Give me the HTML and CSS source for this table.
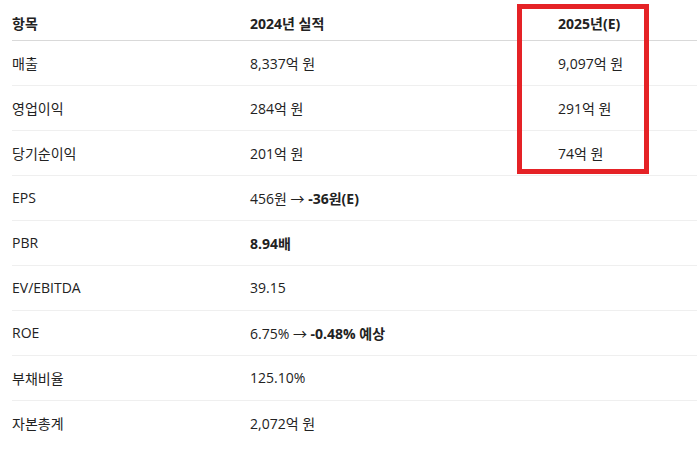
FILE: index.html
```html
<!DOCTYPE html>
<html lang="ko">
<head>
<meta charset="utf-8">
<link rel="stylesheet" href="styles.css">
</head>
<body>
<div class="wrap">
  <table class="fin">
    <thead>
      <tr><th class="c1">항목</th><th class="c2">2024년 실적</th><th class="c3">2025년(E)</th></tr>
    </thead>
    <tbody>
      <tr><td>매출</td><td>8,337억 원</td><td>9,097억 원</td></tr>
      <tr><td>영업이익</td><td>284억 원</td><td>291억 원</td></tr>
      <tr><td>당기순이익</td><td>201억 원</td><td>74억 원</td></tr>
      <tr><td>EPS</td><td>456원 → <b>-36원(E)</b></td><td></td></tr>
      <tr><td>PBR</td><td><b>8.94배</b></td><td></td></tr>
      <tr><td>EV/EBITDA</td><td>39.15</td><td></td></tr>
      <tr><td>ROE</td><td>6.75% → <b>-0.48% 예상</b></td><td></td></tr>
      <tr><td>부채비율</td><td>125.10%</td><td></td></tr>
      <tr><td>자본총계</td><td>2,072억 원</td><td></td></tr>
    </tbody>
  </table>
  <div class="highlight"></div>
</div>
</body>
</html>
```

FILE: styles.css
```css
html, body {
  margin: 0;
  padding: 0;
  background: #fff;
}
body {
  font-family: "Open Sans", "Noto Sans CJK KR", sans-serif;
  font-size: 14px;
  color: #222;
}
.wrap {
  position: relative;
  padding-left: 12px;
}
.fin {
  border-collapse: collapse;
  width: 685px;
  table-layout: fixed;
}
.fin th, .fin td {
  padding: 0;
  text-align: left;
  vertical-align: middle;
}
.fin th {
  height: 40px;
  font-weight: 700;
  border-bottom: 1px solid #d9d9d9;
  padding-top: 7px;
  box-sizing: border-box;
}
.fin td {
  height: 44px;
  border-bottom: 1px solid #efefef;
}
.fin tbody tr:last-child td {
  border-bottom: none;
}
.fin b {
  font-weight: 700;
}
.c1 { width: 238px; }
.c2 { width: 308px; }
.highlight {
  position: absolute;
  left: 517px;
  top: 4px;
  width: 132px;
  height: 170px;
  box-sizing: border-box;
  border: 5px solid #e52226;
}
```
